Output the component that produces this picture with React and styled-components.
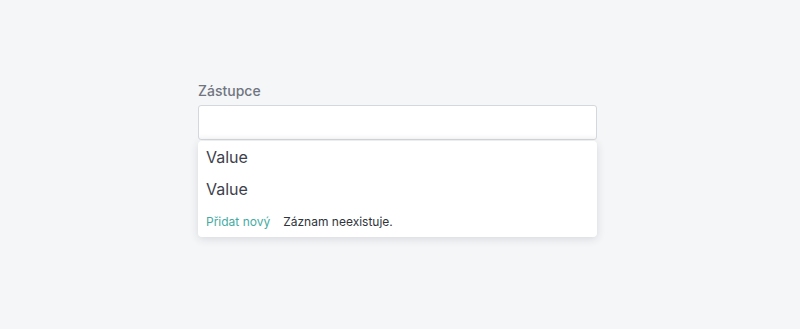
import styled, { createGlobalStyle } from "styled-components";

const GlobalStyle = createGlobalStyle`
  html, body {
    margin: 0;
    padding: 0;
    background: #f5f6f8;
    font-family: Inter, "Noto Sans", sans-serif;
  }
`;

const Page = styled.main`
  width: 800px;
  height: 329px;
  display: flex;
  justify-content: center;
  padding: 81px 5px 0 0;
  box-sizing: border-box;
`;

const Field = styled.div`
  width: 399px;
  display: flex;
  flex-direction: column;
`;

const Label = styled.label`
  font-size: 14px;
  line-height: 20px;
  font-weight: 500;
  color: #707580;
  margin-bottom: 4px;
`;

const Input = styled.input`
  height: 35px;
  box-sizing: border-box;
  border: 1px solid #d4d7dc;
  border-radius: 3px;
  background: #fff;
  box-shadow: inset 0 -6px 6px -6px rgba(0, 0, 0, 0.06);
  outline: none;
  font: inherit;
`;

const Menu = styled.ul`
  list-style: none;
  margin: 1px 0 0;
  padding: 0;
  background: #fff;
  border-radius: 4px;
  box-shadow: 0 2px 8px rgba(30, 40, 60, 0.14);
`;

const Option = styled.li`
  height: 32px;
  display: flex;
  align-items: center;
  padding: 0 8px;
  font-size: 16px;
  color: #3c414c;
`;

const Footer = styled.li`
  height: 32px;
  display: flex;
  align-items: center;
  gap: 13px;
  padding: 0 8px;
  font-size: 12px;
  color: #30343c;
`;

const AddLink = styled.a`
  color: #45aba2;
  cursor: pointer;
`;

const App = () => {
  return (
    <>
      <GlobalStyle />
      <Page>
        <Field>
          <Label>Zástupce</Label>
          <Input />
          <Menu>
            <Option>Value</Option>
            <Option>Value</Option>
            <Footer>
              <AddLink>Přidat nový</AddLink>
              <span>Záznam neexistuje.</span>
            </Footer>
          </Menu>
        </Field>
      </Page>
    </>
  );
};

export default App;
